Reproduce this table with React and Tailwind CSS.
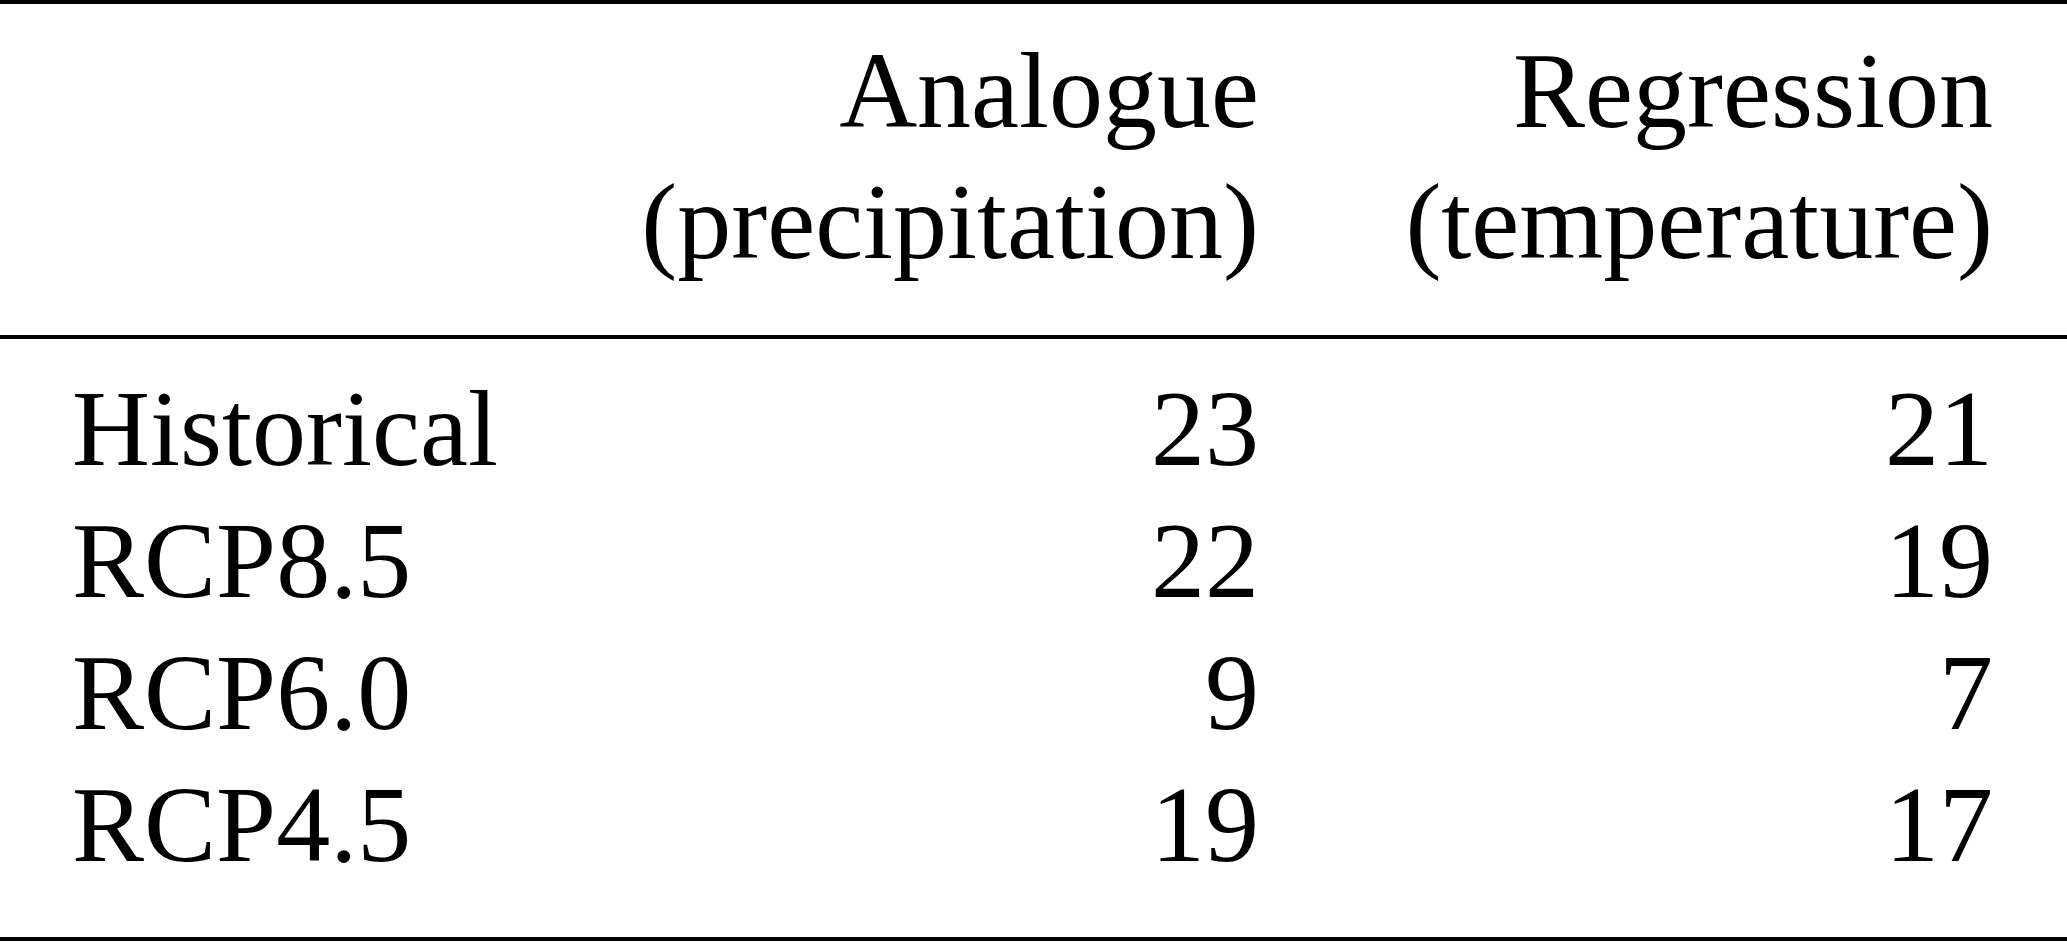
export default function App() {
  const rows = [
    ["Historical", "23", "21"],
    ["RCP8.5", "22", "19"],
    ["RCP6.0", "9", "7"],
    ["RCP4.5", "19", "17"],
  ];
  return (
    <div
      className="w-[2067px] h-[944px] bg-white text-black overflow-hidden flex flex-col"
      style={{ fontFamily: '"Liberation Serif", "Times New Roman", serif' }}
    >
      <div className="h-[4px] bg-black" />
      <div className="grid grid-cols-[1187px_734px] pl-[72px] pt-[21px] pb-[48px] text-[108px] leading-[131px]">
        <div className="text-right">
          <div>Analogue</div>
          <div>(precipitation)</div>
        </div>
        <div className="text-right">
          <div>Regression</div>
          <div>(temperature)</div>
        </div>
      </div>
      <div className="h-[4px] bg-black" />
      <div className="pt-[24px] pb-[46px] text-[108px] leading-[132px]">
        {rows.map((r) => (
          <div key={r[0]} className="grid grid-cols-[1259px_734px]">
            <div className="flex justify-between pl-[72px]">
              <span>{r[0]}</span>
              <span>{r[1]}</span>
            </div>
            <div className="text-right">{r[2]}</div>
          </div>
        ))}
      </div>
      <div className="h-[4px] bg-black" />
    </div>
  );
}
